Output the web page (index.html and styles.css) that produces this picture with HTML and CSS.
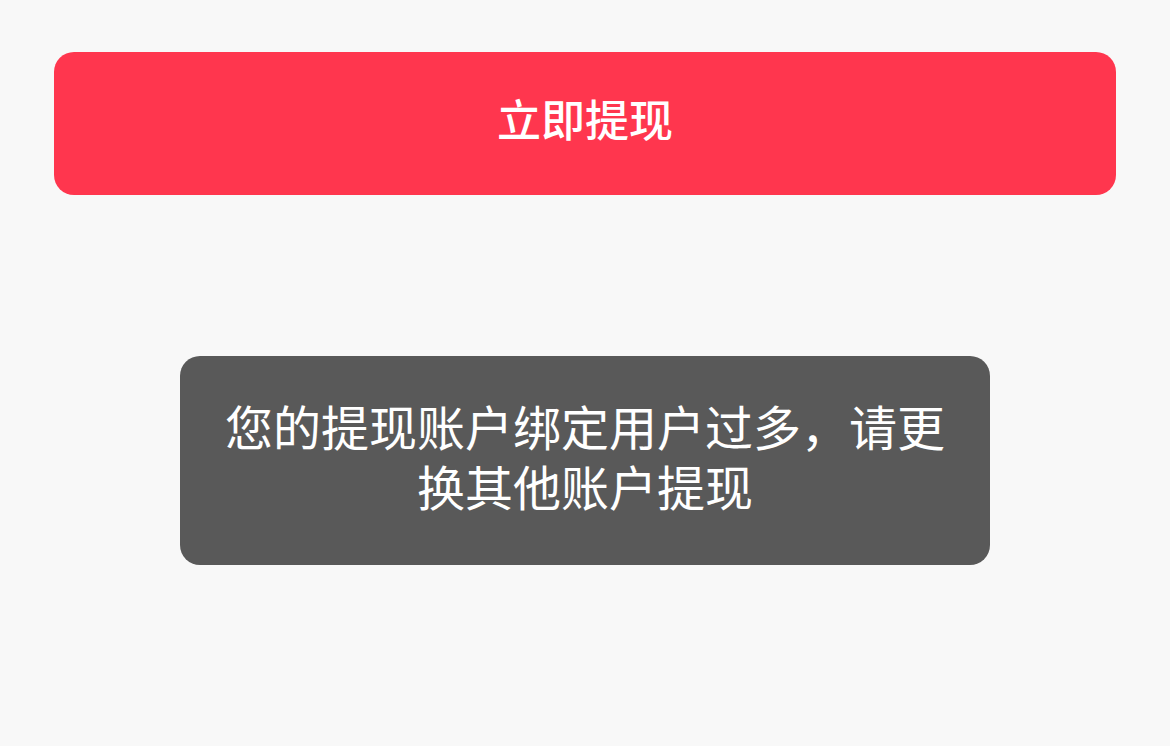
FILE: index.html
```html
<!DOCTYPE html>
<html lang="zh-CN">
<head>
<meta charset="utf-8">
<title>提现</title>
<link rel="stylesheet" href="styles.css">
</head>
<body>
<div class="page">
  <button class="btn-withdraw">立即提现</button>
  <div class="toast">您的提现账户绑定用户过多，请更换其他账户提现</div>
</div>
</body>
</html>
```
FILE: styles.css
```css
html, body {
  margin: 0;
  padding: 0;
  background: #f8f8f8;
}
body {
  font-family: "Noto Sans CJK SC", "Noto Sans", sans-serif;
  width: 1170px;
  height: 746px;
  overflow: hidden;
}
.page {
  padding: 52px 54px 0;
  display: flex;
  flex-direction: column;
  align-items: center;
}
.btn-withdraw {
  width: 100%;
  height: 143px;
  border: none;
  border-radius: 20px;
  background: #ff364e;
  color: #fff;
  font-family: "Noto Sans CJK SC", sans-serif;
  font-size: 44px;
  font-weight: 500;
  line-height: 1;
  padding: 0 0 12px;
}
.toast {
  margin-top: 161px;
  width: 810px;
  box-sizing: border-box;
  padding: 39px 45px 50px;
  background: #595959;
  border-radius: 20px;
  color: #fff;
  font-size: 48px;
  line-height: 60px;
  text-align: center;
}
```
